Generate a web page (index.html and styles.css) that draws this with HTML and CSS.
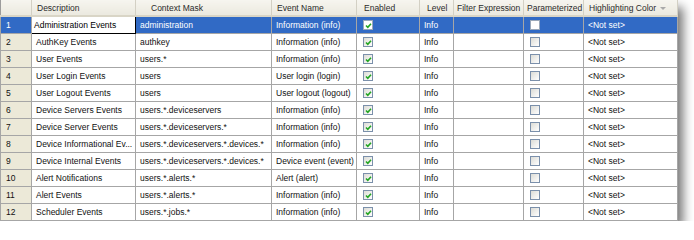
FILE: index.html
```html
<!DOCTYPE html>
<html>
<head>
<meta charset="utf-8">
<link rel="stylesheet" href="styles.css">
</head>
<body>
<div class="grid-wrap">
<table class="grid">
<colgroup>
<col class="c-num"><col class="c-desc"><col class="c-ctx"><col class="c-ev"><col class="c-en"><col class="c-lv"><col class="c-fx"><col class="c-pm"><col class="c-hc">
</colgroup>
<thead>
<tr>
<th></th>
<th>Description</th>
<th class="h-ctx">Context Mask</th>
<th>Event Name</th>
<th class="h-en">Enabled</th>
<th class="h-lv">Level</th>
<th class="h-fx">Filter Expression</th>
<th class="h-pm">Parameterized</th>
<th class="h-hc">Highlighting Color<span class="arrow"></span></th>
</tr>
</thead>
<tbody>
<tr class="sel"><td class="num">1</td><td class="focus">Administration Events</td><td>administration</td><td>Information (info)</td><td class="cb"><span class="box on"><svg viewBox="0 0 7 7" width="7" height="7"><path d="M1 3.5 L2.8 5.3 L6 1.8" fill="none" stroke="#22a522" stroke-width="1.6"/></svg></span></td><td>Info</td><td></td><td class="cb"><span class="box"></span></td><td>&lt;Not set&gt;</td></tr>
<tr><td class="num">2</td><td>AuthKey Events</td><td>authkey</td><td>Information (info)</td><td class="cb"><span class="box on"><svg viewBox="0 0 7 7" width="7" height="7"><path d="M1 3.5 L2.8 5.3 L6 1.8" fill="none" stroke="#22a522" stroke-width="1.6"/></svg></span></td><td>Info</td><td></td><td class="cb"><span class="box"></span></td><td>&lt;Not set&gt;</td></tr>
<tr><td class="num">3</td><td>User Events</td><td>users.*</td><td>Information (info)</td><td class="cb"><span class="box on"><svg viewBox="0 0 7 7" width="7" height="7"><path d="M1 3.5 L2.8 5.3 L6 1.8" fill="none" stroke="#22a522" stroke-width="1.6"/></svg></span></td><td>Info</td><td></td><td class="cb"><span class="box"></span></td><td>&lt;Not set&gt;</td></tr>
<tr><td class="num">4</td><td>User Login Events</td><td>users</td><td>User login (login)</td><td class="cb"><span class="box on"><svg viewBox="0 0 7 7" width="7" height="7"><path d="M1 3.5 L2.8 5.3 L6 1.8" fill="none" stroke="#22a522" stroke-width="1.6"/></svg></span></td><td>Info</td><td></td><td class="cb"><span class="box"></span></td><td>&lt;Not set&gt;</td></tr>
<tr><td class="num">5</td><td>User Logout Events</td><td>users</td><td>User logout (logout)</td><td class="cb"><span class="box on"><svg viewBox="0 0 7 7" width="7" height="7"><path d="M1 3.5 L2.8 5.3 L6 1.8" fill="none" stroke="#22a522" stroke-width="1.6"/></svg></span></td><td>Info</td><td></td><td class="cb"><span class="box"></span></td><td>&lt;Not set&gt;</td></tr>
<tr><td class="num">6</td><td>Device Servers Events</td><td>users.*.deviceservers</td><td>Information (info)</td><td class="cb"><span class="box on"><svg viewBox="0 0 7 7" width="7" height="7"><path d="M1 3.5 L2.8 5.3 L6 1.8" fill="none" stroke="#22a522" stroke-width="1.6"/></svg></span></td><td>Info</td><td></td><td class="cb"><span class="box"></span></td><td>&lt;Not set&gt;</td></tr>
<tr><td class="num">7</td><td>Device Server Events</td><td>users.*.deviceservers.*</td><td>Information (info)</td><td class="cb"><span class="box on"><svg viewBox="0 0 7 7" width="7" height="7"><path d="M1 3.5 L2.8 5.3 L6 1.8" fill="none" stroke="#22a522" stroke-width="1.6"/></svg></span></td><td>Info</td><td></td><td class="cb"><span class="box"></span></td><td>&lt;Not set&gt;</td></tr>
<tr><td class="num">8</td><td>Device Informational Ev...</td><td>users.*.deviceservers.*.devices.*</td><td>Information (info)</td><td class="cb"><span class="box on"><svg viewBox="0 0 7 7" width="7" height="7"><path d="M1 3.5 L2.8 5.3 L6 1.8" fill="none" stroke="#22a522" stroke-width="1.6"/></svg></span></td><td>Info</td><td></td><td class="cb"><span class="box"></span></td><td>&lt;Not set&gt;</td></tr>
<tr><td class="num">9</td><td>Device Internal Events</td><td>users.*.deviceservers.*.devices.*</td><td>Device event (event)</td><td class="cb"><span class="box on"><svg viewBox="0 0 7 7" width="7" height="7"><path d="M1 3.5 L2.8 5.3 L6 1.8" fill="none" stroke="#22a522" stroke-width="1.6"/></svg></span></td><td>Info</td><td></td><td class="cb"><span class="box"></span></td><td>&lt;Not set&gt;</td></tr>
<tr><td class="num">10</td><td>Alert Notifications</td><td>users.*.alerts.*</td><td>Alert (alert)</td><td class="cb"><span class="box on"><svg viewBox="0 0 7 7" width="7" height="7"><path d="M1 3.5 L2.8 5.3 L6 1.8" fill="none" stroke="#22a522" stroke-width="1.6"/></svg></span></td><td>Info</td><td></td><td class="cb"><span class="box"></span></td><td>&lt;Not set&gt;</td></tr>
<tr><td class="num">11</td><td>Alert Events</td><td>users.*.alerts.*</td><td>Information (info)</td><td class="cb"><span class="box on"><svg viewBox="0 0 7 7" width="7" height="7"><path d="M1 3.5 L2.8 5.3 L6 1.8" fill="none" stroke="#22a522" stroke-width="1.6"/></svg></span></td><td>Info</td><td></td><td class="cb"><span class="box"></span></td><td>&lt;Not set&gt;</td></tr>
<tr><td class="num">12</td><td>Scheduler Events</td><td>users.*.jobs.*</td><td>Information (info)</td><td class="cb"><span class="box on"><svg viewBox="0 0 7 7" width="7" height="7"><path d="M1 3.5 L2.8 5.3 L6 1.8" fill="none" stroke="#22a522" stroke-width="1.6"/></svg></span></td><td>Info</td><td></td><td class="cb"><span class="box"></span></td><td>&lt;Not set&gt;</td></tr>
</tbody>
</table>
</div>
</body>
</html>
```
FILE: styles.css
```css
html, body {
  margin: 0;
  padding: 0;
  background: #ffffff;
}
body {
  font-family: "Liberation Sans", Arial, sans-serif;
  font-size: 8.5px;
  color: #111;
}
.grid-wrap {
  width: 677px;
  box-shadow: 6px 7px 10px rgba(0, 0, 0, 0.55);
  background: #fff;
}
.grid {
  width: 677px;
  table-layout: fixed;
  border-collapse: collapse;
  border-left: 1px solid #9c9c9c;
  border-right: 1px solid #9c9c9c;
  border-bottom: 1px solid #9c9c9c;
}
.c-num { width: 31px; }
.c-desc { width: 104px; }
.c-ctx { width: 136px; }
.c-ev { width: 85px; }
.c-en { width: 63px; }
.c-lv { width: 34px; }
.c-fx { width: 70px; }
.c-pm { width: 60px; }
.c-hc { width: 94px; }

thead th {
  height: 15px;
  padding: 0 0 0 5px;
  font-weight: normal;
  text-align: left;
  color: #2a2a2a;
  white-space: nowrap;
  overflow: hidden;
  background: linear-gradient(#f6f5ef, #ebe9df);
  border-bottom: 2px solid #d9d5c6;
  border-right: 1px solid #d3d0c4;
  position: relative;
}
thead th.h-ctx { padding-left: 15px; }
thead th.h-en { padding-left: 7px; }
thead th.h-lv { padding-left: 7px; }
thead th.h-fx { padding-left: 3px; }
thead th.h-pm { padding-left: 3px; }
.arrow {
  position: absolute;
  right: 11px;
  top: 7px;
  width: 0;
  height: 0;
  border-left: 3px solid transparent;
  border-right: 3px solid transparent;
  border-top: 3px solid #a9a9a9;
}

tbody td {
  height: 16px;
  padding: 0 0 0 4px;
  border: 1px solid #a6a6a6;
  white-space: nowrap;
  overflow: hidden;
  vertical-align: middle;
  background: #fff;
}
tbody td.num {
  background: #ece9d8;
  padding-left: 5px;
}
tbody tr.sel td {
  background: #316ac5;
  color: #fff;
}
tbody tr.sel td.focus {
  background: #fff;
  color: #000;
  border: 1px solid #000;
  padding-left: 2px;
}
tbody td.cb {
  padding-left: 6px;
}
.box {
  display: block;
  box-sizing: border-box;
  width: 10px;
  height: 10px;
  border: 1px solid #7b90ab;
  background: linear-gradient(135deg, #dcdcd6, #ffffff);
  position: relative;
}
.box svg {
  position: absolute;
  left: 0.5px;
  top: 0.5px;
}
tr.sel .box {
  background: #fff;
  border-color: #9aa8ba;
}
```
